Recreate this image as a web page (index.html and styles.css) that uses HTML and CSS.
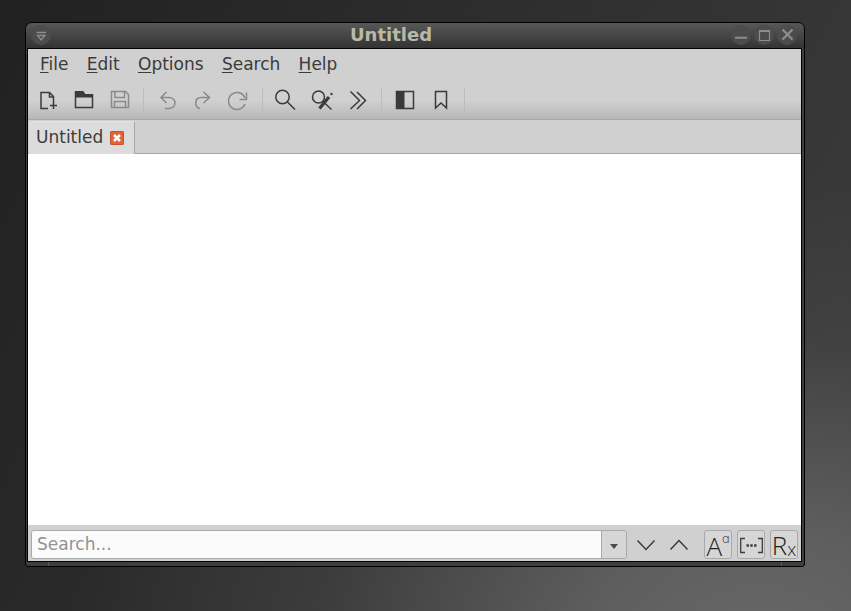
FILE: index.html
```html
<!DOCTYPE html>
<html lang="en">
<head>
<meta charset="utf-8">
<title>Untitled</title>
<link rel="stylesheet" href="styles.css">
</head>
<body>
<div class="desktop">
  <div class="window">
    <header class="titlebar">
      <span class="wbtn wbtn-menu"><svg viewBox="31 25 20 20" width="20" height="20"><path class="wg" d="M36.5 32.5H46M37.5 35.5H45L41.2 40Z" fill="none" stroke-width="1.3"/></svg></span>
      <div class="title">Untitled</div>
      <div class="wbtns">
        <span class="wbtn"><svg viewBox="731 25 20 20" width="20" height="20"><path class="wg" d="M735 37.7H747" stroke-width="2"/></svg></span>
        <span class="wbtn"><svg viewBox="754 25 20 20" width="20" height="20"><path class="wg" d="M759.5 30.5H769.5V40.5H759.5ZM759.5 31.5H769.5" fill="none" stroke-width="1.2"/></svg></span>
        <span class="wbtn"><svg viewBox="777 25 20 20" width="20" height="20"><path class="wg" d="M782.5 29.5L792.5 39.5M792.5 29.5L782.5 39.5" stroke-width="2.3"/></svg></span>
      </div>
    </header>
    <div class="client">
      <nav class="menubar">
        <span class="menu"><u>F</u>ile</span>
        <span class="menu"><u>E</u>dit</span>
        <span class="menu"><u>O</u>ptions</span>
        <span class="menu"><u>S</u>earch</span>
        <span class="menu"><u>H</u>elp</span>
      </nav>
      <div class="toolbar">
        <span class="tool"><svg class="ic" viewBox="36 88 24 24" width="24" height="24"><path d="M48 108.500H41V92.500H49.500L53.500 96.500V102" fill="none"/><path d="M49.500 93V97H53" fill="none"/><path d="M50 105.500H57M53.500 102V109" fill="none"/></svg></span>
        <span class="tool"><svg class="ic" viewBox="72 88 24 24" width="24" height="24"><path d="M75.500 107.500V91.800H83L85 94.800H92.500V107.500Z" fill="none"/><path d="M75.500 92H83L85 95H92.500V97.500H75.500Z" class="solid"/></svg></span>
        <span class="tool"><svg class="ic off" viewBox="108 88 24 24" width="24" height="24"><path d="M111.500 107.500V91.500H125.500L128.500 94.500V107.500Z" fill="none"/><path d="M115 92V97.500H124.500V92M114.500 107.500V101.500H125.500V107.500" fill="none"/></svg></span>
        <span class="sep"></span>
        <span class="tool"><svg class="ic off" viewBox="155 88 24 24" width="24" height="24"><path d="M166.500 92L161 97.500L166.500 103M161 97.500H168.500C172.500 97.500 175 100 175 103C175 106 172.500 108.500 168.500 108.500H165" fill="none"/></svg></span>
        <span class="tool"><svg class="ic off" viewBox="191 88 24 24" width="24" height="24"><path d="M203.500 92L209.500 97.500L203.500 103M209 97.500H201.500C197.500 97.500 195.700 100 195.700 103C195.700 106 197.200 108 200 108.500" fill="none"/></svg></span>
        <span class="tool"><svg class="ic off" viewBox="227 88 24 24" width="24" height="24"><path d="M245 98A8.500 8.500 0 1 0 245 104M246.500 92.500V99.500H239.500" fill="none"/></svg></span>
        <span class="sep"></span>
        <span class="tool"><svg class="ic" viewBox="274 88 24 24" width="24" height="24"><circle cx="282.500" cy="97" r="6.700" fill="none"/><path d="M287.500 102L295 109.500" fill="none"/></svg></span>
        <span class="tool"><svg class="ic" viewBox="310 88 24 24" width="24" height="24"><circle cx="318.500" cy="97" r="6" fill="none"/><path d="M323 101.500L331.500 109.500" fill="none"/><path d="M319.500 108.500L329 97" fill="none" stroke-width="3.200"/><circle cx="331.500" cy="94" r="1.200" class="solid"/></svg></span>
        <span class="tool"><svg class="ic" viewBox="346 88 24 24" width="24" height="24"><path d="M350.500 91.500L359.500 100.500L350.500 109M357 92L365.500 100.500L357 109" fill="none"/></svg></span>
        <span class="sep"></span>
        <span class="tool"><svg class="ic" viewBox="393 88 24 24" width="24" height="24"><path d="M396.500 91.500H413.500V108.500H396.500Z" fill="none"/><rect x="396" y="91" width="8.500" height="18" class="solid"/></svg></span>
        <span class="tool"><svg class="ic" viewBox="429 88 24 24" width="24" height="24"><path d="M435.500 91.500H446.500V108L441 103L435.500 108Z" fill="none"/></svg></span>
        <span class="sep"></span>
      </div>
      <div class="tabbar">
        <div class="tab">
          <span class="tab-label">Untitled</span>
          <span class="tab-close"><svg viewBox="0 0 14 14" width="14" height="14"><path d="M4 4L10 10M10 4L4 10"/></svg></span>
        </div>
      </div>
      <main class="editor"></main>
      <div class="searchbar">
        <div class="combo">
          <input class="search-input" type="text" placeholder="Search...">
          <span class="combo-arrow"></span>
        </div>
        <span class="nav"><svg class="ic" viewBox="634 533 24 24" width="24" height="24"><path d="M637.500 540.500L646 549.500L654.500 540.500" fill="none"/></svg></span>
        <span class="nav"><svg class="ic" viewBox="667 533 24 24" width="24" height="24"><path d="M670.500 549.500L679 540.500L687.500 549.500" fill="none"/></svg></span>
        <div class="toggles">
          <span class="toggle toggle-case">A<sup class="sup">ɑ</sup></span>
          <span class="toggle"><svg class="ic thin" viewBox="738 531 26 27" width="26" height="27"><path d="M745 538.500H740.700V552.500H745M758 538.500H762.300V552.500H758" fill="none"/><path d="M746.500 545.500H756.500" fill="none" stroke-width="2.400" stroke-dasharray="2.400 1.400"/></svg></span>
          <span class="toggle toggle-rx">R<span class="sub">x</span></span>
        </div>
      </div>
    </div>
    <div class="bottomframe"><span class="grip"></span><span class="grip"></span></div>
  </div>
</div>
</body>
</html>
```

FILE: styles.css
```css
* { box-sizing: border-box; }
html, body { margin: 0; height: 100%; }
body { font-family: "DejaVu Sans", sans-serif; overflow: hidden; }

.desktop {
  width: 851px;
  height: 611px;
  padding: 22px 46px 44px 25px;
  background:
    radial-gradient(ellipse 680px 480px at 760px 650px, rgba(104, 104, 104, 1) 0%, rgba(98, 98, 98, 0.9) 25%, rgba(72, 72, 72, 0.5) 65%, rgba(60, 60, 60, 0) 100%),
    linear-gradient(115deg, #212121, #3d3d3d);
}

.window {
  height: 100%;
  display: flex;
  flex-direction: column;
  border: 1px solid #000;
  border-radius: 7px 7px 3px 3px;
  background: #3e3e3e;
  overflow: hidden;
}

.titlebar {
  height: 25px;
  flex: none;
  display: flex;
  align-items: flex-start;
  padding: 2px 7px 0 5px;
  background: linear-gradient(#585858, #333333);
}
.title {
  flex: 1;
  text-align: center;
  font-weight: 700;
  font-size: 18px;
  line-height: 20px;
  color: #b9b9a6;
}
.wbtns { display: flex; gap: 3px; }
.wbtn {
  width: 20px;
  height: 20px;
  border-radius: 50%;
  background: #4c4c4c;
  display: block;
}
.wbtn svg { display: block; }
.wg { stroke: #8d8d8d; }

.client {
  flex: 1;
  min-height: 0;
  margin: 0 2px 0 1px;
  border: 1px solid #000;
  display: flex;
  flex-direction: column;
  background: #d0d0d0;
  color: #3b3b3b;
}

.menubar {
  height: 29px;
  flex: none;
  display: flex;
  align-items: center;
  gap: 18.300px;
  padding: 2px 0 0 12px;
  font-size: 17px;
  line-height: 27px;
}
.menu u { text-underline-offset: 2px; }

.toolbar {
  height: 42px;
  flex: none;
  display: flex;
  align-items: center;
  padding: 3px 0 0 2px;
  border-bottom: 1px solid #a6a6a6;
  background: linear-gradient(#d0d0d0 55%, #b8b8b8);
}
.tool {
  width: 36px;
  height: 36px;
  display: flex;
  align-items: center;
  justify-content: center;
}
.sep {
  width: 11px;
  height: 24px;
  flex: none;
  background: linear-gradient(#bcbcbc, #bcbcbc) center / 1px 100% no-repeat;
}

.ic { display: block; stroke: #3a3a3a; stroke-width: 1.500; }
.ic .solid { fill: #3a3a3a; stroke: none; }
.ic.off { stroke: #8a8a8a; }
.ic.thin { stroke-width: 1.300; stroke: #3d3d3d; }

.tabbar {
  height: 34px;
  flex: none;
  display: flex;
  padding: 1px 0 0 1px;
  border-bottom: 1px solid #a8a8a8;
  background: #d0d0d0;
}
.tab {
  display: flex;
  align-items: center;
  gap: 7px;
  padding: 0 10px 2px 7px;
  margin-bottom: -1px;
  border-right: 1px solid #a8a8a8;
  border-top: 1px solid #e4e4e4;
  border-radius: 2px 2px 0 0;
  background: #dcdcdc;
  font-size: 17px;
  color: #3b3b3b;
}
.tab-close {
  width: 14px;
  height: 14px;
  margin-top: 2px;
  border-radius: 2px;
  background: #e2623a;
  box-shadow: inset 0 0 0 1px #c9512d;
}
.tab-close svg { display: block; stroke: #fff; stroke-width: 2.500; }

.editor { flex: 1; min-height: 0; background: #fff; }

.searchbar {
  height: 36px;
  flex: none;
  display: flex;
  align-items: flex-start;
  padding: 5px 3px 0;
  background: #d0d0d0;
}
.combo {
  width: 596px;
  height: 29px;
  flex: none;
  display: flex;
  border: 1px solid #a9a9a9;
  border-radius: 3px;
  overflow: hidden;
}
.search-input {
  flex: 1;
  min-width: 0;
  border: 0;
  outline: 0;
  padding: 0 0 2px 5px;
  background: #fbfbfb;
  font: 17px "DejaVu Sans", sans-serif;
  color: #3b3b3b;
}
.search-input::placeholder { color: #929292; opacity: 1; }
.combo-arrow {
  width: 25px;
  flex: none;
  border-left: 1px solid #a9a9a9;
  background: #d6d6d6;
  position: relative;
}
.combo-arrow::after {
  content: "";
  position: absolute;
  left: 8px;
  top: 13px;
  border: 4px solid transparent;
  border-top: 5px solid #4a4a4a;
  border-bottom: 0;
}
.nav {
  width: 33px;
  height: 29px;
  flex: none;
  display: flex;
  align-items: center;
  justify-content: center;
}
.nav:first-of-type { margin-left: 2px; }
.toggles { display: flex; gap: 5px; margin-left: 9px; }
.toggle {
  width: 28px;
  height: 29px;
  display: flex;
  align-items: center;
  justify-content: center;
  border: 1px solid #a9a9a9;
  border-radius: 3px;
  background: #d6d6d6;
  font-family: "Open Sans", sans-serif;
  font-weight: 300;
  color: #222;
  line-height: 1;
}
.toggle-case { font-size: 26px; padding-top: 3px; }
.sup { font-family: "DejaVu Sans", sans-serif; font-size: 13px; margin-top: -16px; margin-left: -1px; line-height: 1; }
.toggle-rx { font-size: 26px; padding-top: 1px; }
.sub { font-size: 18px; margin-top: 7px; line-height: 1; }

.bottomframe {
  height: 4px;
  flex: none;
  display: flex;
  justify-content: space-between;
  padding: 0 22px;
}
.grip { width: 1px; height: 4px; background: #5b5b5b; }
```
